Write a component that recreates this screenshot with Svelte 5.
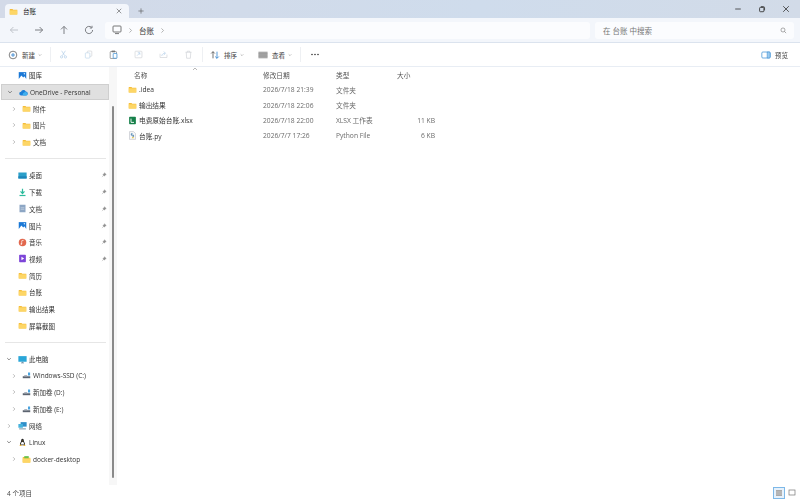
<script>
  const nav = [
    { label: '图库', icon: 'gallery', indent: 1 },
    { label: 'OneDrive - Personal', icon: 'cloud', caret: 'down', indent: 0, active: true },
    { label: '附件', icon: 'folder', caret: 'right', indent: 1 },
    { label: '图片', icon: 'folder', caret: 'right', indent: 1 },
    { label: '文档', icon: 'folder', caret: 'right', indent: 1 },
    { divider: true },
    { label: '桌面', icon: 'desktop', indent: 1, pin: true },
    { label: '下载', icon: 'download', indent: 1, pin: true },
    { label: '文档', icon: 'doc', indent: 1, pin: true },
    { label: '图片', icon: 'gallery', indent: 1, pin: true },
    { label: '音乐', icon: 'music', indent: 1, pin: true },
    { label: '视频', icon: 'video', indent: 1, pin: true },
    { label: '简历', icon: 'folder', indent: 1 },
    { label: '台账', icon: 'folder', indent: 1 },
    { label: '输出结果', icon: 'folder', indent: 1 },
    { label: '屏幕截图', icon: 'folder', indent: 1 },
    { divider: true },
    { label: '此电脑', icon: 'pc', caret: 'down', indent: 0 },
    { label: 'Windows-SSD (C:)', icon: 'drive', caret: 'right', indent: 2 },
    { label: '新加卷 (D:)', icon: 'drive', caret: 'right', indent: 2 },
    { label: '新加卷 (E:)', icon: 'drive', caret: 'right', indent: 2 },
    { label: '网络', icon: 'network', caret: 'right', indent: 0 },
    { label: 'Linux', icon: 'linux', caret: 'down', indent: 0 },
    { label: 'docker-desktop', icon: 'folderGreen', caret: 'right', indent: 2 }
  ];

  const files = [
    { name: '.idea', icon: 'folder', date: '2026/7/18 21:39', type: '文件夹', size: '' },
    { name: '输出结果', icon: 'folder', date: '2026/7/18 22:06', type: '文件夹', size: '' },
    { name: '电费原始台账.xlsx', icon: 'xlsx', date: '2026/7/18 22:00', type: 'XLSX 工作表', size: '11 KB' },
    { name: '台账.py', icon: 'py', date: '2026/7/7 17:26', type: 'Python File', size: '6 KB' }
  ];
</script>

{#snippet icon(name)}
  <svg class="ico" viewBox="0 0 12 12">
    {#if name === 'folder' || name === 'folderGreen'}
      <path d="M1 2.5h3.6l1 1H11v6.5H1z" fill="#f5bd3a" />
      <path d="M1 4.4h10V10H1z" fill="#fdd666" />
      {#if name === 'folderGreen'}<path d="M3 1.5h6v3H3z" fill="#6cc24a" /><path d="M1 5h10v5H1z" fill="#fdd666" />{/if}
    {:else if name === 'gallery'}
      <rect x="1" y="1.5" width="10" height="9" fill="#1a78d6" />
      <path d="M1 10.5 4.5 6 7 8.5 8.5 7l2.5 3.5z" fill="#fff" />
      <circle cx="8.5" cy="3.8" r="1" fill="#cfe8ff" />
    {:else if name === 'cloud'}
      <path d="M3 10a2.5 2.5 0 0 1-.3-5A3.4 3.4 0 0 1 9 4.6 2.7 2.7 0 0 1 9 10z" fill="#1b7fd8" />
      <path d="M6 10a2 2 0 0 1 .4-3.7 2.6 2.6 0 0 1 4.6 1.3A1.5 1.5 0 0 1 10 10z" fill="#3fb0ee" />
    {:else if name === 'desktop'}
      <rect x="0.5" y="2" width="11" height="8" fill="#2b9fc9" />
      <path d="M0.5 7h11v3h-11z" fill="#1c84b8" />
    {:else if name === 'download'}
      <path d="M6 1v6M3.4 4.6 6 7.4l2.6-2.8" stroke="#2dbb9d" stroke-width="1.6" fill="none" />
      <path d="M2 10h8" stroke="#2dbb9d" stroke-width="1.6" />
    {:else if name === 'doc'}
      <rect x="2" y="1" width="8" height="10" fill="#8da6c4" />
      <path d="M3.5 5h5M3.5 7h5" stroke="#d5dfeb" stroke-width="0.8" />
    {:else if name === 'music'}
      <circle cx="6" cy="6" r="5" fill="#e2684e" />
      <path d="M5 8V3.6l2.6-.6" stroke="#fff" stroke-width="0.9" fill="none" />
      <circle cx="4.4" cy="8" r="1" fill="#fff" />
    {:else if name === 'video'}
      <rect x="1.5" y="1" width="9" height="10" rx="1" fill="#7d45d8" />
      <path d="M4.6 3.8v4.4L8.2 6z" fill="#fff" />
    {:else if name === 'pc'}
      <rect x="0.5" y="1.5" width="11" height="7.5" fill="#2aa6d8" />
      <path d="M4 10.5h4M6 9v1.5" stroke="#5c7e95" stroke-width="1" />
    {:else if name === 'drive'}
      <path d="M1 7h10v2.6H1z" fill="#5c6470" />
      <path d="M8 2h2.8v4H8z" fill="#49a3df" />
      <path d="M3 5.4h4V7H3z" fill="#a9b2bd" />
    {:else if name === 'network'}
      <rect x="3.5" y="1.5" width="8" height="6" fill="#2f8fc9" />
      <rect x="0.5" y="4" width="6" height="5" fill="#46b3dd" />
      <path d="M1.5 10.5h9" stroke="#4d7288" stroke-width="1" />
    {:else if name === 'linux'}
      <path d="M6 1C4.4 1 4.2 2.6 4.2 4 4 5.4 2.6 6.8 2.6 8.6L4 9.6h4l1.4-1C9.4 6.8 8 5.4 7.8 4 7.8 2.6 7.6 1 6 1z" fill="#222" />
      <path d="M4.8 5.2C4.4 6.4 3.8 7.4 4 8.8h4C8.2 7.4 7.6 6.4 7.2 5.2z" fill="#fff" />
      <path d="M2 9.4 4 8.6l.8 2H2.6zM10 9.4 8 8.6l-.8 2h2.2z" fill="#eeb431" />
      <path d="M5.3 3.6h1.4L6 4.6z" fill="#eeb431" />
    {:else if name === 'xlsx'}
      <rect x="1.5" y="1" width="9" height="10" rx="1" fill="#16804a" />
      <path d="M4 3.5v5h4" stroke="#fff" stroke-width="1.2" fill="none" />
    {:else if name === 'py'}
      <path d="M2 0.8h5.4L10 3.4v7.8H2z" fill="#f7f8f9" stroke="#a7adb5" stroke-width="0.6" />
      <path d="M6 3.6H4.4v2h3v2H6" stroke="#3a76a8" stroke-width="1.1" fill="none" />
      <path d="M6 7.6h1.4v2H5z" fill="#eec63f" />
    {/if}
  </svg>
{/snippet}

{#snippet caret(dir)}
  <svg class="caret" viewBox="0 0 8 8">
    {#if dir === 'down'}
      <path d="M1.6 2.8 4 5.2l2.4-2.4" fill="none" stroke="#555" stroke-width="0.9" />
    {:else}
      <path d="M2.8 1.6 5.2 4 2.8 6.4" fill="none" stroke="#a0a0a0" stroke-width="0.9" />
    {/if}
  </svg>
{/snippet}

{#snippet chev()}
  <svg class="chev" viewBox="0 0 6 6"><path d="M1 2l2 2 2-2" fill="none" stroke="#8a8a8a" stroke-width="0.8" /></svg>
{/snippet}

<div class="win">
  <div class="titlebar">
    <div class="tab">
      {@render icon('folder')}
      <span class="tab-name">台账</span>
      <svg class="tab-x" viewBox="0 0 8 8"><path d="M1 1l6 6M7 1 1 7" stroke="#555" stroke-width="0.8" /></svg>
    </div>
    <svg class="plus" viewBox="0 0 8 8"><path d="M4 .5v7M.5 4h7" stroke="#555" stroke-width="0.8" /></svg>
    <div class="caption">
      <svg viewBox="0 0 10 10"><path d="M1.5 5h7" stroke="#333" stroke-width="1" /></svg>
      <svg viewBox="0 0 10 10"><rect x="2" y="3" width="5.4" height="5.4" rx="1" fill="none" stroke="#333" stroke-width="1.1" /><path d="M3.6 2h3.2a1.4 1.4 0 0 1 1.4 1.4v3.2" fill="none" stroke="#333" stroke-width="1" /></svg>
      <svg viewBox="0 0 10 10"><path d="M1.5 1.5l7 7M8.5 1.5l-7 7" stroke="#333" stroke-width="1" /></svg>
    </div>
  </div>

  <div class="addr-row">
    <div class="nav-btns">
      <svg viewBox="0 0 10 10"><path d="M9 5H1.4M4.4 2 1.4 5l3 3" fill="none" stroke="#b9bdc4" stroke-width="0.9" /></svg>
      <svg viewBox="0 0 10 10"><path d="M1 5h7.6M5.6 2l3 3-3 3" fill="none" stroke="#6f7276" stroke-width="0.9" /></svg>
      <svg viewBox="0 0 10 10"><path d="M5 9V1.4M2 4.4l3-3 3 3" fill="none" stroke="#6f7276" stroke-width="0.9" /></svg>
      <svg viewBox="0 0 10 10"><path d="M8.6 5A3.6 3.6 0 1 1 7.4 2.3M8 .8v2.2H5.8" fill="none" stroke="#6f7276" stroke-width="0.9" /></svg>
    </div>
    <div class="addr">
      <svg class="pc" viewBox="0 0 10 10"><rect x="1" y="1" width="8" height="6" rx="0.8" fill="none" stroke="#555" stroke-width="0.8" /><path d="M3 8.6h4" stroke="#555" stroke-width="0.8" /></svg>
      {@render caret('right')}
      <span>台账</span>
      {@render caret('right')}
    </div>
    <div class="search">
      <span>在 台账 中搜索</span>
      <svg viewBox="0 0 8 8"><circle cx="3.4" cy="3.4" r="2.3" fill="none" stroke="#777" stroke-width="0.7" /><path d="M5.1 5.1 7 7" stroke="#777" stroke-width="0.7" /></svg>
    </div>
  </div>

  <div class="toolbar">
    <div class="tool">
      <svg class="t-ico" viewBox="0 0 12 12"><circle cx="6" cy="6" r="4.6" fill="none" stroke="#444" stroke-width="0.8" /><path d="M6 3.6v4.8M3.6 6h4.8" stroke="#1d78c9" stroke-width="0.9" /></svg>
      <span>新建</span>{@render chev()}
    </div>
    <i class="sep"></i>
    <div class="tool-icons">
      <svg viewBox="0 0 12 12"><path d="M3.5 1 7.6 7.6M8.5 1 4.4 7.6" stroke="#a8c8e6" stroke-width="0.8" /><circle cx="3.4" cy="9.2" r="1.5" fill="none" stroke="#a8c8e6" stroke-width="0.8" /><circle cx="8.6" cy="9.2" r="1.5" fill="none" stroke="#a8c8e6" stroke-width="0.8" /></svg>
      <svg viewBox="0 0 12 12"><rect x="4.4" y="1.4" width="6" height="7" rx="1" fill="none" stroke="#c9cdd2" stroke-width="0.8" /><rect x="1.8" y="3.8" width="6" height="7" rx="1" fill="#fff" stroke="#b5d0e8" stroke-width="0.8" /></svg>
      <svg viewBox="0 0 12 12"><rect x="1.6" y="2" width="8.4" height="9.4" rx="1" fill="none" stroke="#666" stroke-width="0.8" /><rect x="3.6" y="0.8" width="4.4" height="2.2" fill="#777" /><rect x="5.6" y="4.6" width="5" height="6.4" rx="0.6" fill="#fff" stroke="#2a85d0" stroke-width="0.9" /></svg>
      <svg viewBox="0 0 12 12"><rect x="1.4" y="1.6" width="9.2" height="8.8" rx="1" fill="none" stroke="#c9cdd2" stroke-width="0.8" /><path d="M4 7.6 7.6 4M5 3.6h2.8v2.8" fill="none" stroke="#a8c8e6" stroke-width="0.8" /></svg>
      <svg viewBox="0 0 12 12"><path d="M1.4 5v5h9.2V6" fill="none" stroke="#c9cdd2" stroke-width="0.8" /><path d="M3.6 8c.4-2.6 2.4-3.6 4.4-3.6M6.4 2 8.8 4.4 6.4 6.6" fill="none" stroke="#a8c8e6" stroke-width="0.8" /></svg>
      <svg viewBox="0 0 12 12"><path d="M2 3h8M4.4 3V1.6h3.2V3M3 3l.5 8h5L9 3" fill="none" stroke="#c9cdd2" stroke-width="0.8" /></svg>
    </div>
    <i class="sep s2"></i>
    <div class="tool sort">
      <svg class="t-ico" viewBox="0 0 12 12"><path d="M3.6 10V2M1.4 4.2 3.6 2l2.2 2.2" fill="none" stroke="#444" stroke-width="0.9" /><path d="M8.4 2v8M6.2 7.8 8.4 10l2.2-2.2" fill="none" stroke="#1d78c9" stroke-width="0.9" /></svg>
      <span>排序</span>{@render chev()}
    </div>
    <div class="tool view">
      <svg class="t-ico" viewBox="0 0 12 12"><rect x="0.5" y="2" width="11" height="8" fill="#a6a6a6" /><path d="M.5 4.6h11M.5 7.3h11" stroke="#8f8f8f" stroke-width="0.6" /></svg>
      <span>查看</span>{@render chev()}
    </div>
    <i class="sep s3"></i>
    <svg class="more" viewBox="0 0 12 4"><circle cx="2" cy="2" r="1" /><circle cx="6" cy="2" r="1" /><circle cx="10" cy="2" r="1" /></svg>
    <div class="preview">
      <svg class="t-ico" viewBox="0 0 12 12"><rect x="1" y="2.4" width="10" height="7.2" rx="1.2" fill="none" stroke="#2a85d0" stroke-width="0.8" /><path d="M7.4 2.4v7.2h2.4a1.2 1.2 0 0 0 1.2-1.2V3.6a1.2 1.2 0 0 0-1.2-1.2z" fill="#9ccbef" stroke="#2a85d0" stroke-width="0.6" /></svg>
      <span>预览</span>
    </div>
  </div>

  <div class="body">
    <aside class="side">
      <div class="tree">
        {#each nav as row}
          {#if row.divider}
            <div class="divider"></div>
          {:else}
            <div class="row indent-{row.indent}" class:active={row.active}>
              {#if row.caret}{@render caret(row.caret)}{/if}
              {@render icon(row.icon)}
              <span class="label">{row.label}</span>
              {#if row.pin}
                <svg class="pin" viewBox="0 0 8 8"><path d="M4.6 1 7 3.4 5.8 3.9 4.4 5.6 2.4 3.6 4.1 2.2zM3 5 1.2 6.8" fill="#8f8f8f" stroke="#8f8f8f" stroke-width="0.5" /></svg>
              {/if}
            </div>
          {/if}
        {/each}
      </div>
      <div class="scroll"><div class="thumb"></div></div>
    </aside>

    <main class="list">
      <div class="head">
        <svg class="sort-arrow" viewBox="0 0 6 4"><path d="M1 3l2-2 2 2" fill="none" stroke="#888" stroke-width="0.6" /></svg>
        <span class="c-name">名称</span>
        <span class="c-date">修改日期</span>
        <span class="c-type">类型</span>
        <span class="c-size">大小</span>
      </div>
      {#each files as f}
        <div class="file">
          <span class="c-name name">{@render icon(f.icon)}<b>{f.name}</b></span>
          <span class="c-date">{f.date}</span>
          <span class="c-type">{f.type}</span>
          <span class="c-size size">{f.size}</span>
        </div>
      {/each}
    </main>
  </div>

  <footer class="status">
    <span>4 个项目</span>
    <div class="views">
      <span class="v on"><svg viewBox="0 0 8 8"><rect x="1" y="1" width="6" height="6" fill="#a9a9a9" /><path d="M1 3h6M1 5h6" stroke="#d8d8d8" stroke-width="0.5" /></svg></span>
      <span class="v"><svg viewBox="0 0 8 8"><rect x="1" y="1" width="6" height="5" fill="none" stroke="#777" stroke-width="0.7" /></svg></span>
    </div>
  </footer>
</div>

<style>
  :global(body) {
    margin: 0;
    background: #fff;
  }

  .win {
    width: 800px;
    height: 500px;
    display: flex;
    flex-direction: column;
    overflow: hidden;
    font-family: "Open Sans", "Noto Sans CJK SC", sans-serif;
    font-size: 6.5px;
    color: #333;
    filter: blur(0.3px);
  }

  svg {
    display: block;
    flex: none;
  }

  .titlebar {
    height: 18px;
    flex: none;
    display: flex;
    align-items: flex-end;
    padding-left: 5px;
    background: linear-gradient(90deg, #d3dae8 0%, #cfdcec 60%, #d2dbe8 100%);
  }

  .tab {
    width: 124px;
    height: 14px;
    display: flex;
    align-items: center;
    padding: 0 7px 0 4px;
    box-sizing: border-box;
    background: #f3f6fb;
    border-radius: 4px 4px 0 0;
  }

  .tab .ico {
    margin-right: 5px;
  }

  .tab-name {
    flex: 1;
    color: #222;
  }

  .tab-x {
    width: 6px;
    height: 6px;
  }

  .plus {
    width: 6px;
    height: 6px;
    margin: 0 0 4px 9px;
  }

  .caption {
    margin-left: auto;
    align-self: stretch;
    display: flex;
    align-items: center;
    gap: 16px;
    padding-right: 10px;
  }

  .caption svg {
    width: 8px;
    height: 8px;
  }

  .addr-row {
    height: 24px;
    flex: none;
    display: flex;
    align-items: center;
    background: #f3f6fb;
    border-bottom: 1px solid #dbe3ee;
    box-sizing: content-box;
  }

  .nav-btns {
    width: 105px;
    display: flex;
    gap: 15px;
    padding-left: 9px;
    box-sizing: border-box;
  }

  .nav-btns svg {
    width: 10px;
    height: 10px;
  }

  .addr {
    width: 485px;
    height: 17px;
    display: flex;
    align-items: center;
    gap: 5px;
    padding-left: 7px;
    box-sizing: border-box;
    background: #fbfcfe;
    border-radius: 3px;
    color: #333;
    font-size: 7.5px;
  }

  .addr .pc {
    width: 10px;
    height: 10px;
  }

  .addr .caret {
    width: 7px;
    height: 7px;
  }

  .search {
    width: 199px;
    height: 17px;
    margin-left: 5px;
    display: flex;
    align-items: center;
    justify-content: space-between;
    padding: 0 7px 0 8px;
    box-sizing: border-box;
    background: #fbfcfe;
    border-radius: 3px;
    color: #777;
    font-size: 7.5px;
  }

  .search svg {
    width: 7px;
    height: 7px;
  }

  .toolbar {
    height: 23px;
    flex: none;
    display: flex;
    align-items: center;
    padding-left: 8px;
    border-bottom: 1px solid #e8edf4;
    background: #fff;
  }

  .tool {
    display: flex;
    align-items: center;
    gap: 4px;
    color: #444;
    font-size: 6.5px;
  }

  .t-ico {
    width: 10px;
    height: 10px;
  }

  .chev {
    width: 4px;
    height: 4px;
    margin-left: -1px;
  }

  .sep {
    width: 1px;
    height: 15px;
    background: #eef0f3;
    margin: 0 8px;
  }

  .sep.s2 {
    margin: 0 7px 0 9px;
  }

  .sep.s3 {
    margin: 0 9px 0 8px;
  }

  .tool-icons {
    display: flex;
    gap: 16px;
  }

  .tool-icons svg {
    width: 9px;
    height: 9px;
  }

  .view {
    margin-left: 14px;
  }

  .more {
    width: 10px;
    height: 3px;
    fill: #222;
  }

  .preview {
    margin-left: auto;
    margin-right: 12px;
    display: flex;
    align-items: center;
    gap: 4px;
    color: #444;
    font-size: 6.5px;
  }

  .body {
    flex: 1;
    min-height: 0;
    display: flex;
  }

  .side {
    width: 117px;
    flex: none;
    display: flex;
    box-sizing: border-box;
  }

  .tree {
    width: 109px;
    padding-left: 1px;
    box-sizing: border-box;
  }

  .row {
    height: 16.7px;
    display: flex;
    align-items: center;
    box-sizing: border-box;
    color: #333;
  }

  .row.active {
    background: #e0e0e0;
    border: 1px solid #cfcfcf;
  }

  .row.indent-0 {
    padding-left: 5px;
  }

  .row.indent-1 {
    padding-left: 17px;
  }

  .row.indent-2,
  .row.indent-1:has(.caret) {
    padding-left: 10px;
  }

  .row .caret {
    width: 6px;
    height: 6px;
    margin-right: 6px;
  }

  .row.indent-1:has(.caret) .caret,
  .row.indent-2 .caret {
    margin-right: 5px;
  }

  .ico {
    width: 9px;
    height: 9px;
    margin-right: 2px;
  }

  .label {
    flex: 1;
    white-space: nowrap;
  }

  .pin {
    width: 6px;
    height: 6px;
    margin-right: 2px;
  }

  .divider {
    height: 1px;
    margin: 8px 3px 7.7px 4px;
    background: #e6e6e6;
  }

  .scroll {
    width: 8px;
    height: 100%;
    background: #f7f7f7;
  }

  .thumb {
    width: 2px;
    height: 372px;
    margin: 39px 0 0 3px;
    background: #8a8a8a;
    border-radius: 1px;
  }

  .list {
    flex: 1;
    min-width: 0;
    padding-left: 10px;
    position: relative;
    font-size: 6.7px;
  }

  .head {
    height: 15px;
    display: flex;
    align-items: center;
    color: #555;
  }

  .sort-arrow {
    position: absolute;
    left: 75px;
    top: 0;
    width: 6px;
    height: 4px;
  }

  .c-name {
    width: 129px;
    padding-left: 7px;
    box-sizing: border-box;
    flex: none;
  }

  .c-date {
    width: 75px;
    padding-left: 7px;
    box-sizing: border-box;
    flex: none;
  }

  .c-type {
    width: 63px;
    padding-left: 5px;
    box-sizing: border-box;
    flex: none;
  }

  .c-size {
    width: 42px;
    padding-left: 3px;
    box-sizing: border-box;
    flex: none;
  }

  .file {
    height: 15.4px;
    display: flex;
    align-items: center;
    color: #6a6a6a;
  }

  .name {
    display: flex;
    align-items: center;
    padding-left: 1px;
  }

  .name b {
    font-weight: 400;
    color: #333;
  }

  .size {
    text-align: right;
    padding-right: 1px;
  }

  .status {
    height: 15px;
    flex: none;
    display: flex;
    align-items: center;
    justify-content: space-between;
    padding: 0 2px 0 7px;
    color: #444;
  }

  .views {
    display: flex;
    align-items: center;
    gap: 1px;
  }

  .v {
    width: 12px;
    height: 12px;
    display: flex;
    align-items: center;
    justify-content: center;
    box-sizing: border-box;
  }

  .v.on {
    background: #e6f1fb;
    border: 1px solid #7db8e8;
  }

  .v svg {
    width: 8px;
    height: 8px;
  }
</style>
